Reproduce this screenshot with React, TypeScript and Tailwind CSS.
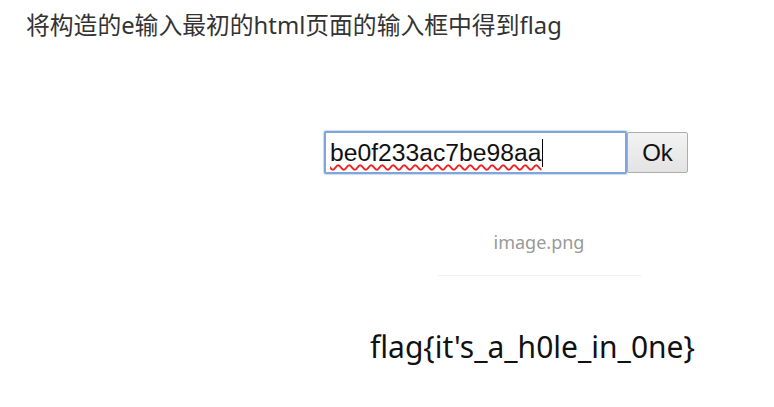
import React from "react"

const App: React.FC = () => {
  return (
    <div className="h-[407px] w-[774px] bg-white font-['Liberation_Sans','Noto_Sans_CJK_SC',sans-serif]">
      {/* Heading */}
      <p className="pl-[26px] pt-[8px] font-['Noto_Sans','Noto_Sans_CJK_SC',sans-serif] text-[23.8px] leading-[34px] text-[#333]">
        将构造的e输入最初的html页面的输入框中得到flag
      </p>

      {/* Input form */}
      <div className="mt-[89px] flex pl-[324px]">
        <div className="flex h-[43px] w-[303px] items-center rounded-[2px] border-2 border-[#7fa6da] bg-white pl-[4px] text-[24.7px] text-[#111] shadow-[0_0_1px_1px_#c9dcf2]">
          <span className="underline decoration-[#e22] decoration-wavy decoration-[1.5px] underline-offset-[3px]">
            be0f233ac7be98aa
          </span>
          <span className="ml-[1px] h-[28px] w-px bg-black" />
        </div>
        <button className="mt-px h-[41px] w-[61px] rounded-[2px] border border-[#adadad] bg-gradient-to-b from-[#f3f3f3] to-[#e3e3e3] text-[24px] text-[#111]">
          Ok
        </button>
      </div>

      {/* Image caption */}
      <div className="mt-[56px] flex flex-col items-center pl-[304px]">
        <p className="font-['Noto_Sans',sans-serif] text-[18px] leading-[24px] text-[#999]">image.png</p>
        <div className="mt-[21px] h-px w-[203px] bg-[#eee]" />
      </div>

      {/* Flag */}
      <p className="mt-[51px] pl-[370px] font-['Noto_Sans',sans-serif] text-[30px] leading-[40px] text-[#111]">
        flag{"{"}it's_a_h0le_in_0ne{"}"}
      </p>
    </div>
  )
}

export default App
